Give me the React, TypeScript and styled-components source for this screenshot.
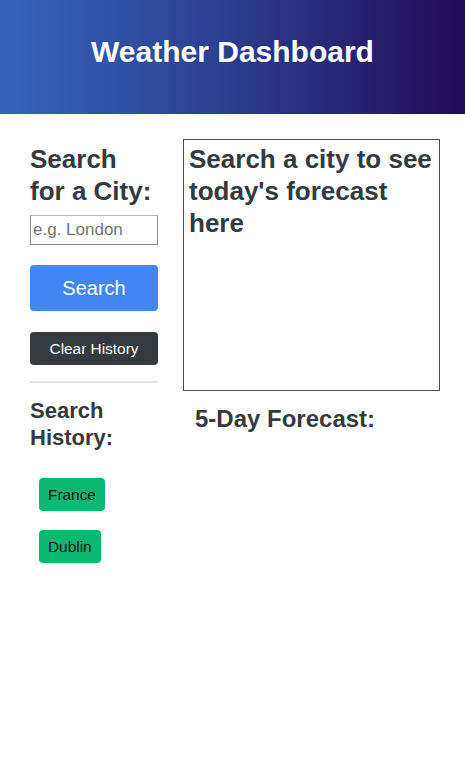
import React from "react";
import styled, { createGlobalStyle } from "styled-components";

const Global = createGlobalStyle`
  html, body { margin: 0; padding: 0; background: #fff; }
  body { font-family: "Liberation Sans", Arial, sans-serif; }
  * { box-sizing: border-box; }
`;

const Header = styled.header`
  height: 114px;
  display: flex;
  align-items: center;
  justify-content: center;
  background: linear-gradient(90deg, #3564bd 0%, #2c3d8e 50%, #220b58 100%);
`;

const Title = styled.h1`
  margin: 0 0 10px;
  color: #fff;
  font-size: 30px;
  font-weight: 700;
  line-height: 1.2;
`;

const Main = styled.main`
  display: flex;
  gap: 25px;
  padding: 25px 25px 0 30px;
`;

const Sidebar = styled.aside`
  width: 128px;
  flex: none;
  display: flex;
  flex-direction: column;
  padding-top: 4px;
`;

const Heading = styled.h2<{ $size: number; $lh: number }>`
  margin: 0;
  color: #343a40;
  font-size: ${(p) => p.$size}px;
  line-height: ${(p) => p.$lh}px;
  font-weight: 700;
`;

const Input = styled.input`
  margin-top: 8px;
  width: 128px;
  height: 30px;
  padding: 0 2px;
  border: 1px solid #8a8a8a;
  border-top-color: #b5b5b5;
  font-family: "Liberation Sans", Arial, sans-serif;
  font-size: 17px;
  color: #333;
  &::placeholder { color: #757575; }
`;

const Button = styled.button<{ $bg: string; $color: string; $h: number; $size: number }>`
  display: block;
  border: none;
  border-radius: 4px;
  background: ${(p) => p.$bg};
  color: ${(p) => p.$color};
  height: ${(p) => p.$h}px;
  font-family: "Liberation Sans", Arial, sans-serif;
  font-size: ${(p) => p.$size}px;
  padding: 0 9px;
  cursor: pointer;
`;

const WideButton = styled(Button)<{ $mt: number }>`
  width: 128px;
  margin-top: ${(p) => p.$mt}px;
`;

const Rule = styled.hr`
  width: 128px;
  margin: 16px 0 14px;
  border: none;
  height: 2px;
  background: #e5e5e5;
`;

const History = styled.div`
  display: flex;
  flex-direction: column;
  align-items: flex-start;
  gap: 19px;
  padding: 27px 0 0 9px;
`;

const Content = styled.section`
  flex: 1;
  display: flex;
  flex-direction: column;
`;

const TodayBox = styled.div`
  height: 252px;
  border: 1px solid #4d4d4d;
  padding: 3px 5px;
`;

const ForecastTitle = styled(Heading)`
  margin: 13px 0 0 12px;
`;

export default function App() {
  return (
    <>
      <Global />
      <Header>
        <Title>Weather Dashboard</Title>
      </Header>
      <Main>
        <Sidebar>
          <Heading $size={26} $lh={32}>Search for a City:</Heading>
          <Input placeholder="e.g. London" />
          <WideButton $mt={20} $bg="#4285f4" $color="#fff" $h={46} $size={20}>Search</WideButton>
          <WideButton $mt={21} $bg="#343a40" $color="#fff" $h={33} $size={15.4}>Clear History</WideButton>
          <Rule />
          <Heading $size={22} $lh={27}>Search History:</Heading>
          <History>
            <Button $bg="#0bb871" $color="#111" $h={33} $size={15.4}>France</Button>
            <Button $bg="#0bb871" $color="#111" $h={33} $size={15.4}>Dublin</Button>
          </History>
        </Sidebar>
        <Content>
          <TodayBox>
            <Heading $size={26} $lh={32}>Search a city to see today's forecast here</Heading>
          </TodayBox>
          <ForecastTitle $size={24} $lh={29}>5-Day Forecast:</ForecastTitle>
        </Content>
      </Main>
    </>
  );
}
